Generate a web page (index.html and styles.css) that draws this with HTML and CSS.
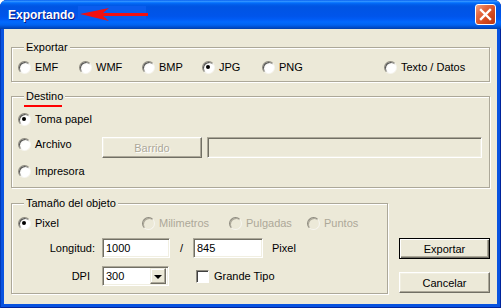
FILE: index.html
```html
<!DOCTYPE html>
<html lang="es">
<head>
    <meta charset="UTF-8">
    <meta name="viewport" content="width=device-width, initial-scale=1.0">
    <title>Exportando</title>
    <link rel="stylesheet" href="styles.css">
</head>
<body>
    <div class="window">
        <div class="titlebar">
            <span class="title">Exportando</span>
            <span class="title-mark"></span>
            <svg class="arrow" width="72" height="17" viewBox="0 0 72 17">
                <polygon points="2,9 31,3 25,8 70,8 70,11 25,11 31,16" fill="#f21010"/>
            </svg>
            <span class="close-btn">
                <svg width="19" height="19" viewBox="0 0 19 19">
                    <path d="M5 5 L14 14 M14 5 L5 14" stroke="#fff" stroke-width="2.4" stroke-linecap="square"/>
                </svg>
            </span>
        </div>
        <div class="client">
            <fieldset class="group group-export">
                <legend>Exportar</legend>
                <div class="export-row">
                    <label class="radio"><span class="dot"></span>EMF</label>
                    <label class="radio"><span class="dot"></span>WMF</label>
                    <label class="radio"><span class="dot"></span>BMP</label>
                    <label class="radio checked"><span class="dot"></span>JPG</label>
                    <label class="radio"><span class="dot"></span>PNG</label>
                    <label class="radio"><span class="dot"></span>Texto / Datos</label>
                </div>
            </fieldset>

            <fieldset class="group group-dest">
                <legend class="marked">Destino</legend>
                <div class="dest-row">
                    <label class="radio checked"><span class="dot"></span>Toma papel</label>
                </div>
                <div class="dest-row file-row">
                    <label class="radio file-radio"><span class="dot"></span>Archivo</label>
                    <button type="button" class="btn btn-browse" disabled>Barrido</button>
                    <span class="edit edit-path"></span>
                </div>
                <div class="dest-row last-row">
                    <label class="radio"><span class="dot"></span>Impresora</label>
                </div>
            </fieldset>

            <div class="bottom">
                <fieldset class="group group-size">
                    <legend>Tamaño del objeto</legend>
                    <div class="unit-row">
                        <label class="radio checked"><span class="dot"></span>Pixel</label>
                        <label class="radio disabled"><span class="dot"></span>Milimetros</label>
                        <label class="radio disabled"><span class="dot"></span>Pulgadas</label>
                        <label class="radio disabled"><span class="dot"></span>Puntos</label>
                    </div>
                    <div class="size-row">
                        <span class="field-label">Longitud:</span>
                        <span class="edit edit-num">1000</span>
                        <span class="slash">/</span>
                        <span class="edit edit-num2">845</span>
                        <span class="unit">Pixel</span>
                    </div>
                    <div class="size-row dpi-row">
                        <span class="field-label dpi-label">DPI</span>
                        <span class="combo">
                            <span class="combo-value">300</span>
                            <span class="combo-btn"><span class="caret"></span></span>
                        </span>
                        <label class="check"><span class="box"></span>Grande Tipo</label>
                    </div>
                </fieldset>
                <div class="actions">
                    <button type="button" class="btn btn-default">Exportar</button>
                    <button type="button" class="btn">Cancelar</button>
                </div>
            </div>
        </div>
    </div>
</body>
</html>
```

FILE: styles.css
```css
* {
    box-sizing: border-box;
}
body {
    margin: 0;
    font-family: "Liberation Sans", Arial, sans-serif;
    font-size: 11px;
    color: #000;
    background: #fff;
}
.window {
    width: 501px;
    height: 308px;
    display: flex;
    flex-direction: column;
    background: #0853e0;
    border-radius: 7px 7px 0 0;
    overflow: hidden;
    box-shadow: inset 1px 0 0 #0039b8, inset -1px 0 0 #00249c, inset 0 -1px 0 #00249c;
}
.titlebar {
    position: relative;
    height: 29px;
    flex: none;
    display: flex;
    align-items: center;
    padding: 1px 5px 0 8px;
    background: linear-gradient(to bottom, #0058ee 0%, #3593ff 4%, #288eff 6%, #127dff 8%, #036ffc 10%, #0262ee 14%, #0057e5 20%, #0054e3 24%, #0055eb 56%, #005bf5 66%, #026afe 76%, #0062ef 86%, #0052d6 92%, #0040ab 100%);
}
.title {
    position: relative;
    z-index: 1;
    color: #fff;
    font-weight: bold;
    font-size: 12px;
    text-shadow: 1px 1px 0 #0a1883;
}
.title-mark {
    position: absolute;
    left: 78px;
    top: 6px;
    width: 68px;
    height: 13px;
    background: #0b5ced;
}
.arrow {
    position: absolute;
    left: 78px;
    top: 5px;
}
.close-btn {
    margin-left: auto;
    width: 21px;
    height: 21px;
    margin-top: -1px;
    border: 1px solid #fff;
    border-radius: 3px;
    display: flex;
    align-items: center;
    justify-content: center;
    background: linear-gradient(135deg, #f2a485 0%, #e66c45 30%, #d4491d 65%, #bb3712 100%);
}
.client {
    flex: 1;
    margin: 0 4px 4px;
    padding: 0 7px;
    background: #ece9d8;
}

/* group boxes */
.group {
    margin: 0;
    padding: 0 6px;
    min-width: 0;
    border: 1px solid #aca899;
    box-shadow: 1px 1px 0 #fff, inset 1px 1px 0 #fff;
}
.group legend {
    position: relative;
    margin-left: 6px;
    padding: 0 2px;
    height: 13px;
    line-height: 13px;
    background: #ece9d8;
}
.group legend.marked::after {
    content: "";
    position: absolute;
    left: 0;
    top: 15px;
    width: 38px;
    height: 2px;
    background: #f00;
}
.group-export {
    margin-top: 12px;
    padding-top: 7px;
    padding-bottom: 7px;
}
.export-row {
    display: grid;
    grid-template-columns: 61px 63px 60px 60px 122px auto;
}
.group-dest {
    margin-top: 8px;
    padding-top: 10px;
    padding-bottom: 9px;
}
.dest-row {
    display: flex;
    align-items: flex-start;
}
.file-row {
    margin-top: 11px;
}
.last-row {
    margin-top: 7px;
}
.file-radio {
    width: 84px;
    margin-top: 1px;
}

/* radios & checkbox */
.radio {
    display: flex;
    align-items: center;
    gap: 4px;
    height: 13px;
    line-height: 13px;
    white-space: nowrap;
}
.dot {
    position: relative;
    flex: none;
    width: 13px;
    height: 13px;
    border-radius: 50%;
    border: 1px solid;
    border-color: #8d8a7f #f7f6f0 #f7f6f0 #8d8a7f;
    background: radial-gradient(circle at 65% 65%, #fff 0%, #fff 45%, #e2e0d4 100%);
    box-shadow: inset 1px 1px 0 #555;
}
.radio.checked .dot::after {
    content: "";
    position: absolute;
    left: 3px;
    top: 3px;
    width: 4px;
    height: 4px;
    border-radius: 50%;
    background: #000;
}
.radio.disabled {
    color: #aca899;
}
.radio.disabled .dot {
    background: #ece9d8;
    box-shadow: inset 1px 1px 0 #aca899;
}
.check {
    display: flex;
    align-items: center;
    gap: 5px;
    margin-left: 27px;
    height: 13px;
}
.box {
    width: 13px;
    height: 13px;
    border: 1px solid;
    border-color: #8d8a7f #fff #fff #8d8a7f;
    background: #fff;
    box-shadow: inset 1px 1px 0 #404040;
}

/* tamano group */
.bottom {
    display: flex;
    margin-top: 9px;
}
.group-size {
    width: 377px;
    padding-top: 7px;
    padding-bottom: 7px;
}
.unit-row {
    display: grid;
    grid-template-columns: 124px 87px 78px auto;
}
.size-row {
    display: flex;
    align-items: center;
    margin-top: 8px;
}
.field-label {
    width: 77px;
    margin-right: 7px;
    text-align: right;
}
.dpi-label {
    padding-right: 5px;
}
.edit {
    display: flex;
    align-items: center;
    height: 20px;
    padding: 0 3px;
    border: 1px solid;
    border-color: #aca899 #fff #fff #aca899;
    box-shadow: inset 1px 1px 0 #716f64, inset -1px -1px 0 #f1efe2;
    background: #fff;
}
.edit.edit-path {
    margin-left: 5px;
    width: 275px;
    height: 21px;
    background: #ece9d8;
}
.edit-num {
    width: 68px;
}
.slash {
    width: 23px;
    text-align: center;
}
.edit-num2 {
    width: 70px;
}
.unit {
    margin-left: 9px;
}
.combo {
    display: flex;
    align-items: center;
    width: 67px;
    height: 20px;
    padding: 2px 2px 2px 3px;
    border: 1px solid;
    border-color: #aca899 #fff #fff #aca899;
    box-shadow: inset 1px 1px 0 #716f64, inset -1px -1px 0 #f1efe2;
    background: #fff;
}
.combo-value {
    flex: 1;
}
.combo-btn {
    width: 16px;
    height: 16px;
    display: flex;
    align-items: center;
    justify-content: center;
    border: 1px solid;
    border-color: #f1efe2 #716f64 #716f64 #f1efe2;
    box-shadow: inset -1px -1px 0 #aca899, inset 1px 1px 0 #fff;
    background: #ece9d8;
}
.caret {
    width: 0;
    height: 0;
    border-left: 4px solid transparent;
    border-right: 4px solid transparent;
    border-top: 4px solid #000;
    margin-top: 1px;
}

/* buttons */
.actions {
    display: flex;
    flex-direction: column;
    gap: 13px;
    margin-left: 11px;
    padding-top: 41px;
}
.btn {
    width: 91px;
    height: 21px;
    padding: 0;
    font-family: "Liberation Sans", Arial, sans-serif;
    font-size: 11px;
    color: #000;
    background: #ece9d8;
    border: 1px solid;
    border-color: #fff #716f64 #716f64 #fff;
    box-shadow: inset -1px -1px 0 #aca899, inset 1px 1px 0 #f1efe2;
}
.btn.btn-browse {
    width: 100px;
}
.btn-default {
    border: 1px solid #000;
    box-shadow: inset 1px 1px 0 #fff, inset -1px -1px 0 #716f64, inset -2px -2px 0 #aca899;
}
.btn:disabled {
    color: #aca899;
    text-shadow: 1px 1px 0 #fff;
}
```
